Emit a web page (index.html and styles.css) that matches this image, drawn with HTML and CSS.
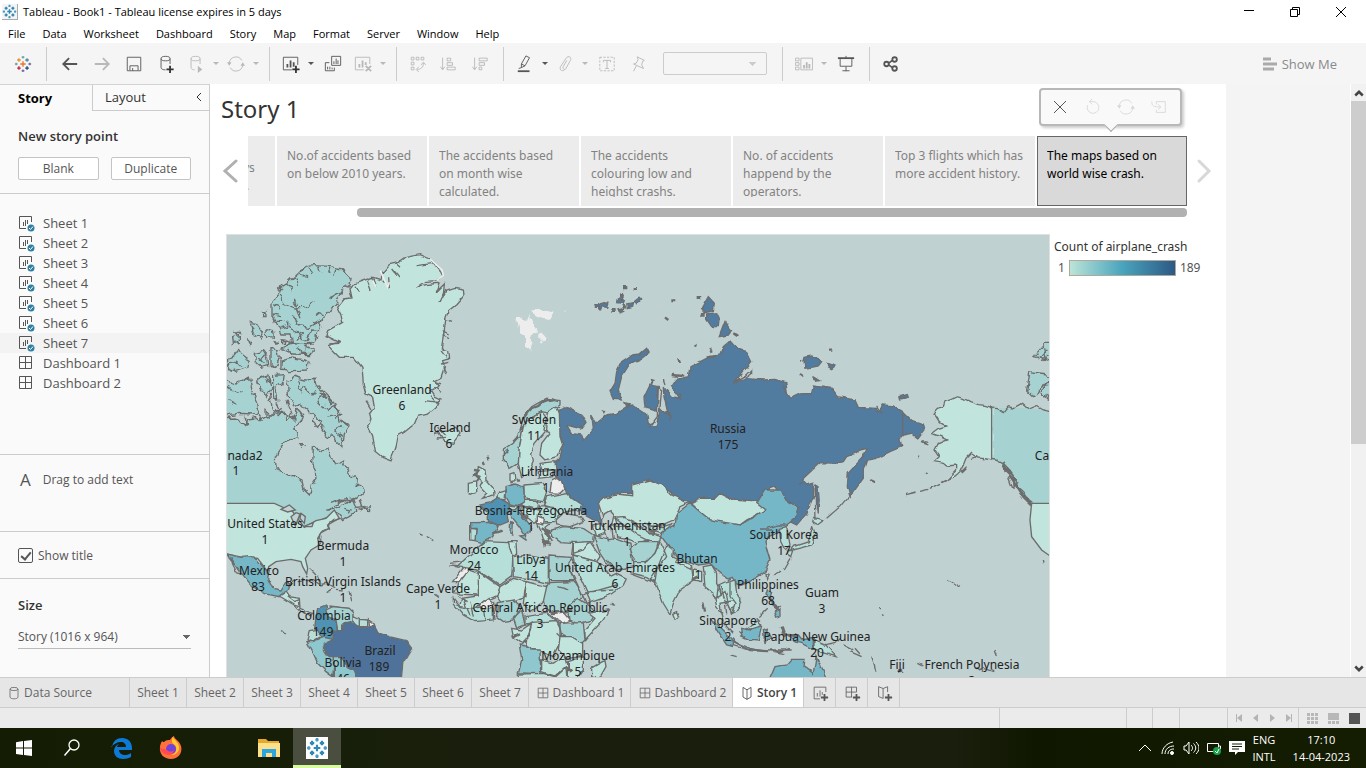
FILE: index.html
```html
<!DOCTYPE html>
<html lang="en">
<head>
<meta charset="utf-8">
<title>Tableau - Book1</title>
<link rel="stylesheet" href="styles.css">
</head>
<body>
<svg class="defs" aria-hidden="true">
  <defs>
    <symbol id="logo" viewBox="0 0 20 20"><path d="M10 7v6M7 10h6" stroke="var(--l1)"/><path d="M5.500 3.500v4M3.500 5.500h4" stroke="var(--l2)"/><path d="M14.500 3.500v4M12.500 5.500h4" stroke="var(--l3)"/><path d="M5.500 12.500v4M3.500 14.500h4" stroke="var(--l4)"/><path d="M14.500 12.500v4M12.500 14.500h4" stroke="var(--l5)"/><path d="M10 1v3M8.500 2.500h3M2.500 8.500v3M1 10h3" stroke="var(--l6)"/><path d="M17.500 8.500v3M16 10h3M10 16v3M8.500 17.500h3" stroke="var(--l7)"/></symbol>
    <symbol id="sheet" viewBox="0 0 20 20"><path d="M16.500 9V3.500h-13v13H10M7 10v4M10 7v7M12.500 9v3"/></symbol>
    <symbol id="grid" viewBox="0 0 20 20"><path d="M4 4h12v12H4zM10 4v12M4 10h12"/></symbol>
    <symbol id="book" viewBox="0 0 20 20"><path d="M10 6 5 3v12l5 3 5-3V3zM10 6v12"/></symbol>
    <symbol id="refresh" viewBox="0 0 20 20"><path d="M2.500 9a7.500 7.500 0 0 1 14-3M17.500 11a7.500 7.500 0 0 1-14 3"/><path class="solid" d="M0 8h5l-2.500 4zM15 12h5l-2.500-4z"/></symbol>
    <symbol id="ss" viewBox="0 0 18 18"><path d="M13.500 8V2.500h-12v12H8M5.500 8v4M7.500 6v6M9.500 6v4"/><circle class="dot" cx="13" cy="14" r="3.500"/><path class="tick" d="m11 14 1.500 1.500L15 12.500"/></symbol>
  </defs>
</svg>
<div class="app">
  <header class="titlebar">
    <svg class="appicon logo-blue" viewBox="0 0 20 20"><use href="#logo"/></svg>
    <span class="wtitle">Tableau - Book1 - Tableau license expires in 5 days</span>
    <button class="win" aria-label="Minimize"><svg viewBox="0 0 12 12"><path d="M1 4.500h10"/></svg></button>
    <button class="win" aria-label="Restore"><svg viewBox="0 0 12 12"><path d="M1.500 3.500h7v7h-7zM3.500 3.500v-2h7v7h-2"/></svg></button>
    <button class="win" aria-label="Close"><svg viewBox="0 0 12 12"><path d="m1 1 10 10M11 1 1 11"/></svg></button>
  </header>
  <nav class="menu">
    <button>File</button><button>Data</button><button>Worksheet</button><button>Dashboard</button><button>Story</button><button>Map</button><button>Format</button><button>Server</button><button>Window</button><button>Help</button>
  </nav>
  <div class="toolbar">
    <div class="tg"><button class="tb" aria-label="Start"><svg class="logo-color" viewBox="0 0 20 20"><use href="#logo"/></svg></button></div>
    <div class="tg">
      <button class="tb on" aria-label="Undo"><svg class="heavy" viewBox="0 0 20 20"><path d="M18 10H3M9 3.500 2.500 10 9 16.500"/></svg></button>
      <button class="tb" aria-label="Redo"><svg class="heavy" viewBox="0 0 20 20"><path d="M2 10h15M11 3.500l6.500 6.500-6.500 6.500"/></svg></button>
      <button class="tb on" aria-label="Save"><svg viewBox="0 0 20 20"><path d="M2.500 2.500h15v15h-15zM5.500 17v-5h9v5M8.500 14.500v3"/></svg></button>
      <button class="tb on" aria-label="New data source"><svg viewBox="0 0 20 20"><path d="M4.500 4v10c0 1.500 2 2.500 5 2.500M14.500 4v6"/><ellipse cx="9.500" cy="4" rx="5" ry="2.500"/><path class="plus" d="M14.500 12v8M10.500 16h8"/></svg></button>
      <button class="tb n" aria-label="Auto updates"><svg viewBox="0 0 20 20"><path d="M4.500 4v10c0 1.500 2 2.500 4 2.500M14.500 4v6"/><ellipse cx="9.500" cy="4" rx="5" ry="2.500"/><path class="solid" d="M12 12l5 4-5 4z"/></svg></button>
      <button class="car" aria-label="Updates menu"></button>
      <button class="tb n" aria-label="Refresh"><svg viewBox="0 0 20 20"><use href="#refresh"/></svg></button>
      <button class="car" aria-label="Refresh menu"></button>
    </div>
    <div class="tg">
      <button class="tb n on" aria-label="New worksheet"><svg viewBox="0 0 20 20"><path d="M17.500 11V2.500h-16v14H11"/><path class="bars" d="M6 10v4M9.500 6v8M13 8v5"/><path class="plus" d="M15.500 12v8M11.500 16h8"/></svg></button>
      <button class="car on" aria-label="New menu"></button>
      <button class="tb on" aria-label="Duplicate"><svg viewBox="0 0 20 20"><path d="M8.500 1.500h10v10h-10zM11 7v3M13.500 4v6M15.500 6v4M6 8.500H1.500v9h10V14M4 13v3M6.500 13v3M9 14v2"/></svg></button>
      <button class="tb n" aria-label="Clear sheet"><svg viewBox="0 0 20 20"><path d="M17.500 10V2.500h-16v14H11"/><path class="bars" d="M6 10v4M9.500 6v8M13 8v3M13 12l6 6M19 12l-6 6"/></svg></button>
      <button class="car" aria-label="Clear menu"></button>
    </div>
    <div class="tg">
      <button class="tb n" aria-label="Swap"><svg viewBox="0 0 20 20"><path d="M2.500 2.500h3v3h-3zM8 2.500h3v3H8zM13.500 2.500h3v3h-3zM2.500 8h3v3h-3zM2.500 13.500h3v3h-3zM16 9c0 5-3 7-7 7M13.500 11 16 8l2.500 3M11 13l-3 3 3 3"/></svg></button>
      <button class="tb" aria-label="Sort ascending"><svg viewBox="0 0 20 20"><path d="M4 3v13M1.500 13 4 16.500 6.500 13M9 3.500h4v3H9zM9 8.500h6v3H9zM9 13.500h9v3H9z"/></svg></button>
      <button class="tb" aria-label="Sort descending"><svg viewBox="0 0 20 20"><path d="M4 3v13M1.500 13 4 16.500 6.500 13M9 3.500h9v3H9zM9 8.500h6v3H9zM9 13.500h3v3H9z"/></svg></button>
    </div>
    <div class="tg">
      <button class="tb n on" aria-label="Highlight"><svg viewBox="0 0 20 20"><path d="m6 10 5-9 4 2-5 9-4 2zM6 10l4 2M3 15l3-1"/><path class="bars" d="M2 18h13"/></svg></button>
      <button class="car on" aria-label="Highlight menu"></button>
      <button class="tb n" aria-label="Group"><svg viewBox="0 0 20 20"><path d="m12 6-4 7c-1 3 2 4 3 2l5-9c2-4-3-6-5-2L5 13c-2 4 3 6 5 3"/></svg></button>
      <button class="car" aria-label="Group menu"></button>
      <button class="tb" aria-label="Show labels"><svg viewBox="0 0 20 20"><path stroke-dasharray="2.500 1.500" d="M2 2.500h16v15H2z"/><path d="M6 8V6h8v2M10 6v9M8 15h4"/></svg></button>
      <button class="tb" aria-label="Fix axes"><svg viewBox="0 0 20 20"><path d="m8 2 8 4-2 1-1 4 2 4-11-5 3-1 2-4zM7 12l-3 6"/></svg></button>
      <select class="fit" aria-label="Fit" disabled><option></option></select>
    </div>
    <div class="tg">
      <button class="tb n" aria-label="Show cards"><svg viewBox="0 0 20 20"><path d="M.500 3.500h4v3h-4zM.500 8.500h4v3h-4zM.500 13.500h4v3h-4zM6.500 3.500h13v13h-13z"/><path class="bars" d="M10 11v4M13 8v7M16 10v5"/></svg></button>
      <button class="car" aria-label="Cards menu"></button>
      <button class="tb on" aria-label="Presentation"><svg viewBox="0 0 20 20"><path class="bars" d="M1 3.500h18"/><path d="M3.500 4v8.500h13V4M10 1v2M10 13v5M6 17.500h8"/></svg></button>
    </div>
    <div class="tg last"><button class="tb n on" aria-label="Share"><svg class="heavy" viewBox="0 0 20 20"><circle cx="5" cy="10" r="2.500"/><circle cx="14" cy="5" r="2.500"/><circle cx="14" cy="15" r="2.500"/><path d="m7.500 9 4-3M7.500 11l4 3"/></svg></button></div>
    <button class="showme"><svg viewBox="0 0 16 16"><path d="M1 3h8M1 8h14M1 13h11"/></svg>Show Me</button>
  </div>

  <div class="body">
    <aside class="side">
      <div class="stabs"><button class="st cur">Story</button><button class="st lay">Layout<svg viewBox="0 0 8 10"><path d="M6 1 2 5l4 4"/></svg></button></div>
      <section class="points"><h2>New story point</h2><div class="btns"><button>Blank</button><button>Duplicate</button></div></section>
      <ul class="sheets">
        <li><svg viewBox="0 0 18 18"><use href="#ss"/></svg>Sheet 1</li>
        <li><svg viewBox="0 0 18 18"><use href="#ss"/></svg>Sheet 2</li>
        <li><svg viewBox="0 0 18 18"><use href="#ss"/></svg>Sheet 3</li>
        <li><svg viewBox="0 0 18 18"><use href="#ss"/></svg>Sheet 4</li>
        <li><svg viewBox="0 0 18 18"><use href="#ss"/></svg>Sheet 5</li>
        <li><svg viewBox="0 0 18 18"><use href="#ss"/></svg>Sheet 6</li>
        <li class="hov"><svg viewBox="0 0 18 18"><use href="#ss"/></svg>Sheet 7</li>
        <li><svg viewBox="0 0 18 18"><path d="M1.500 2.500h12v12h-12zM7.500 2.500v12M1.500 8.500h12"/></svg>Dashboard 1</li>
        <li><svg viewBox="0 0 18 18"><path d="M1.500 2.500h12v12h-12zM7.500 2.500v12M1.500 8.500h12"/></svg>Dashboard 2</li>
      </ul>
      <section class="drag"><b>A</b>Drag to add text</section>
      <section class="show"><label><input type="checkbox" checked>Show title</label></section>
      <section class="size"><h2><label for="size">Size</label></h2><select id="size"><option>Story (1016 x 964)</option></select></section>
    </aside>

    <main class="canvas">
      <h1>Story 1</h1>
      <div class="strip">
        <button class="nav" aria-label="Previous"><svg viewBox="0 0 16 26"><path d="M14 3 3 13l11 10"/></svg></button>
        <div class="cards">
          <button class="card cut">ys<br>&nbsp;.</button>
          <button class="card"><span>No.of accidents based on below 2010 years.</span></button>
          <button class="card"><span>The accidents based on month wise calculated.</span></button>
          <button class="card"><span>The accidents colouring low and heighst crashs.</span></button>
          <button class="card"><span>No. of accidents happend by the operators.</span></button>
          <button class="card"><span>Top 3 flights which has more accident history.</span></button>
          <button class="card active"><span>The maps based on world wise crash.</span></button>
        </div>
        <button class="nav next" aria-label="Next"><svg viewBox="0 0 16 26"><path d="m3 3 10 10L3 23"/></svg></button>
      </div>
      <div class="pop">
        <button class="x" aria-label="Delete"><svg viewBox="0 0 20 20"><path d="m4 4 12 12M16 4 4 16"/></svg></button>
        <button aria-label="Revert"><svg viewBox="0 0 20 20"><path d="M4 8a6.500 6.500 0 1 0 6-4H6M9 1 6 4l3 3"/></svg></button>
        <button aria-label="Update"><svg viewBox="0 0 20 20"><use href="#refresh"/></svg></button>
        <button aria-label="Save as new"><svg viewBox="0 0 20 20"><path d="M7 7V4h10v12H7v-3M2 4c0 5 2 6 10 6M9 7l3 3-3 3"/></svg></button>
      </div>
      <div class="hbar"></div>
      <div class="view">
        <div class="mapbox">
        <svg class="map" viewBox="227 235 822 442" preserveAspectRatio="xMinYMin slice" role="img" aria-label="Crash count by country">
          <defs>
            <filter id="coast" x="-5%" y="-5%" width="110%" height="110%" color-interpolation-filters="sRGB"><feTurbulence type="fractalNoise" baseFrequency=".045" numOctaves="1" seed="4"/><feDisplacementMap in="SourceGraphic" scale="14" xChannelSelector="R" yChannelSelector="G"/></filter>
            <filter id="fjord" x="-5%" y="-5%" width="110%" height="110%" color-interpolation-filters="sRGB"><feTurbulence type="fractalNoise" baseFrequency=".055" numOctaves="1" seed="9"/><feDisplacementMap in="SourceGraphic" scale="26" xChannelSelector="R" yChannelSelector="G"/></filter>
          </defs>
          <!-- Arctic Canada and Greenland -->
          <g class="land" transform="translate(226 234) scale(.3333)">
            <g filter="url(#fjord)">
            <path class="c3" d="M-20 556 20 552 40 556 60 575 65 556 90 550 100 558 120 545 130 552 148 530 160 542 172 530 185 560 205 548 215 525 232 545 225 562 205 580 215 608 190 620 165 640 148 665 150 703 185 718 228 738 235 768 250 783 256 758 270 738 268 708 260 688 262 642 290 650 308 645 316 672 330 690 350 678 352 694 372 712 375 725 392 735 395 750 410 760 412 778 395 793 345 800 312 828 325 826 348 812 380 796 390 820 432 815 434 830 410 828 385 822 386 836 350 860 330 836 325 848 300 853 270 860 235 890 200 850 145 830-20 830z"/>
              <path class="c3" d="M232 104 260 95 310 97 345 104 375 130 372 150 350 165 340 195 315 225 290 255 280 290 265 318 240 335 262 345 255 362 200 360 165 345 200 330 195 300 165 300 150 270 138 245 138 205 155 180 165 160 190 145 210 125z"/>
              <path class="n" d="M163 180 175 210 205 222 235 220 265 205M205 250 220 275 250 280 280 262M310 190 355 170M180 265 240 320 262 285M205 200 225 250M195 285 230 300 210 318M170 320 205 330 260 328M180 150 200 165M200 135 218 150M225 112 240 130M250 100 258 120M275 97 285 115M305 98 312 118M330 105 325 122M145 215 165 225M140 240 165 245M150 262 172 262M160 282 185 275M290 245 270 240M285 270 262 265M278 292 255 290M185 345 195 358M215 340 222 360M240 340 238 358"/>
              <path class="c3" d="M165 380 200 372 230 376 250 385 245 408 190 410 165 405zM135 342 155 348 160 370 150 405 135 390zM85 355 110 350 125 370 128 395 105 400 88 385zM5 375 25 365 40 345 55 370 70 380 65 400 30 412 5 400zM72 265 90 268 112 300 105 315 85 300zM122 285 142 290 145 310 125 308zM20 310 40 305 40 325 22 328zM140 425 175 422 172 445 150 460 155 500 140 490zM95 435 125 425 135 460 120 485 98 460zM185 445 205 430 235 438 265 436 272 455 300 480 330 510 345 560 372 575 355 600 350 640 330 620 300 600 280 570 260 540 235 520 210 510 188 500zM-10 435 30 450 70 430 80 470 100 520 90 540 40 538-10 550zM110 235h10v10h-10zM25 292 42 296 35 300zM170 322h8v10h-8zM140 320 155 322 150 328zM68 318 76 322 74 336zM222 632h12l-4 10z"/>
              <path class="n" d="M215 440 225 470 240 460 250 478 270 480M290 485 275 510M330 515 305 530M345 575 325 590 350 605M10 500 30 510M5 460 35 480 50 470M150 505 160 535 200 550M180 500 195 540 205 560M130 480 140 530 175 545M55 545 65 575M95 540 110 560M115 530 135 550 170 520M120 360 105 380M95 370 115 390M30 380 45 395M5 390 35 385M285 515 310 525M300 550 330 545M270 470 255 480M345 540 330 560M350 620 335 600"/>
              <path class="n dark" d="M285 478 300 490M308 492 320 510M328 515 340 530M345 560 365 575"/>
              <path class="sea" d="M265 545 285 560 275 580 262 565z"/>
            </g>
            <g filter="url(#coast)">
              <path class="c1" d="M378 192 372 165 385 150 410 141 440 130 465 138 470 115 490 92 520 85 540 70 580 62 610 75 625 90 645 115 650 125 635 140 600 142 572 162 600 152 640 148 630 175 655 150 652 185 665 168 690 160 712 165 714 185 690 212 668 230 660 250 655 290 650 320 646 345 665 350 668 375 650 380 655 400 645 430 625 440 640 455 615 470 625 485 645 495 635 515 605 540 575 547 565 570 535 595 517 605 510 640 495 678 470 668 448 650 440 605 425 575 435 555 430 540 445 520 440 490 420 480 412 450 408 400 385 370 340 370 306 335 340 325 300 305 305 290 350 265 345 240 335 220 355 195z"/>
              <path class="n" d="M400 172 390 155M435 168 425 140M450 155 440 132M520 130 500 105M525 100 510 85M575 95 620 88M642 205 660 165M655 255 675 262M650 305 672 315M645 350 660 370M645 390 670 385M620 440 645 450M600 500 640 505M615 488 635 510M420 500 435 525M470 140 490 160 488 130M310 330 340 328M650 290 668 300M650 400 660 420M625 460 645 475"/>
              <path class="c1" d="M635 590 665 588 690 580 702 600 680 628 655 622z"/><path class="n" d="M635 580 660 605M640 595 625 600M632 612 660 610"/>
            </g>
            <path class="snow" d="M612 75 648 108 652 124 632 140M463 110 485 160 490 145M440 140 450 158"/>
          </g>
          <!-- United States to Brazil -->
          <g class="land" transform="translate(226 450) scale(.3333)">
            <path class="c1" d="M-9 160H145L200 185 235 232 270 212 300 205 325 180 340 205 305 225 310 235 285 248 275 265 280 285 255 300 238 325 245 355 242 372 230 350 225 335 195 328 150 335 128 350 125 365 95 325 70 322 40 320-9 310z"/>
            <path class="sea" d="M165 178 190 165 208 180 185 186zM195 200 210 188 222 192 208 228zM225 190 238 200 235 220 222 205zM232 230 262 218 258 230z"/>
            <g filter="url(#coast)">
            <path class="n" d="M340 205 320 212 305 225 310 235 292 240 285 248 275 265 285 270 280 285 285 260"/>
            <path class="c4" d="M3 312 45 322 70 320 95 330 112 352 130 360 125 385 140 415 165 420 180 395 198 400 190 420 170 430 160 440 120 432 80 410 55 380 30 350 10 325z"/>
            <path class="sea" d="M14 322 45 370 30 365z"/>
            <path class="c1" d="M160 438 180 425 190 440 220 445 222 475 245 485 262 490 255 500 230 488 205 465 180 450z"/>
            <path class="n" d="M185 440 205 455 222 448M205 465 222 470M235 480 232 490M190 410 200 388M315 160 340 150 370 155 390 140M355 175 375 180 370 190M400 150 408 170 430 178M250 355 270 375M215 395 260 390 280 405M280 405 300 400 325 412 305 425M330 418 350 420M370 425 378 455M275 380 280 395M310 468 370 475"/>
            <path class="c5" d="M275 475 300 465 305 495 330 510 335 545 320 560 320 595 300 590 265 545 270 500z"/>
            <path class="c3" d="M300 480 320 470 370 475 385 490 380 515 350 525 350 540 335 540 330 510 305 500z"/>
            <path class="c2" d="M380 495 400 505 400 530 385 525zM400 508 425 510 425 530 400 530z"/>
            <path class="c0" d="M428 510 443 520 432 532z"/>
            <path class="c2" d="M250 545 275 540 285 560 258 575 243 570z"/>
            <path class="c3b" d="M243 575 260 575 290 562 318 568 292 590 300 615 325 620 325 683 300 665 275 640 262 610zM325 620 345 617 365 650 385 660 400 690 320 690z"/>
            <path class="c7" d="M320 545 350 540 355 520 385 520 400 533 440 530 445 520 455 548 490 560 540 572 557 595 530 640 525 700 400 700 385 660 365 650 345 620 310 620 292 600 295 580 318 570z"/>
            <path class="n" d="M165 545 180 552M580 252 590 256M600 258 622 272M670 345 705 348M625 430 640 440"/>
            </g>
          </g>
          <!-- Northern Europe and Russia -->
          <g class="land" transform="translate(450 280) scale(.3333)">
            <g filter="url(#coast)">
            <path class="c6" d="M320 390 345 380 395 405 408 430 395 447 350 435 365 460 395 465 400 480 430 445 425 405 440 430 470 405 500 400 530 380 545 375 590 405 595 430 610 438 628 410 620 390 585 380 582 350 600 312 622 320 625 380 640 395 655 405 642 350 640 320 665 350 690 355 665 320 680 298 715 290 720 260 770 235 810 225 820 200 840 183 860 205 890 215 905 245 850 310 880 295 940 300 975 298 1008 308 1012 340 1022 355 1050 342 1085 340 1090 318 1145 325 1165 350 1215 360 1225 382 1280 385 1285 395 1300 375 1330 378 1358 395 1390 425 1420 435 1425 450 1405 475 1385 460 1358 465 1350 475 1355 500 1320 515 1280 535 1250 540 1240 570 1240 595 1200 650 1192 620 1195 580 1240 530 1252 505 1230 510 1215 520 1190 530 1180 545 1160 550 1110 548 1055 600 1070 615 1090 610 1090 650 1070 700 1040 735 1020 725 1045 685 1005 665 975 620 950 630 945 655 920 665 880 660 840 655 810 640 795 660 730 670 690 660 665 640 600 600 545 615 550 640 500 640 460 655 445 690 455 725 430 720 395 700 390 670 350 640 340 610 320 590 315 550 330 535 338 495 330 460z"/>
            <path class="c6" d="M590 205 597 218 575 235 540 250 515 290 505 330 517 360 490 358 480 335 495 310 500 275 515 245 545 225 570 222zM775 50 793 70 790 92 765 98 755 85zM770 102 800 98 808 115 805 140 785 140 770 118zM825 125 845 150 835 165 808 170zM755 98 762 98 762 108 752 108zM525 368 538 372 532 382zM455 390 465 392 460 400zM605 302 612 304 608 312z"/>
            <path class="c6" d="M1065 232 1085 228 1105 235 1115 245 1105 258 1085 262 1065 265 1062 245zM1130 250 1155 258 1145 266 1135 260zM1088 290 1108 302 1098 304zM1350 350 1372 344 1375 352 1352 357zM1096 615 1104 620 1108 660 1102 700 1098 665z"/>
            <path class="c6" d="M435 74h14l-2 8h-10zM450 72 462 68 474 70 470 82 456 80 452 92 446 86zM500 60 510 54 524 58 520 70 502 68zM512 42 520 38 522 50 512 50zM504 90 518 86 524 94 512 98zM530 72 548 68 545 82 532 86zM552 62 565 52 572 60 560 74zM486 86h9v8h-9zM553 26h8v5h-8zM521 20h9v6h-9zM742 50h10v5h-10zM666 60h8v5h-8z"/>
            <path class="n dark" d="M514 62 522 40M520 74 526 86M645 112 655 120M850 160 862 168M780 205 785 215M735 195 738 200M685 235 690 250M1050 242 1056 246M1140 212 1150 212M1050 282 1058 288M665 285 700 288M770 232 800 228"/>
            <path class="sea" d="M625 320 635 330 628 400 618 440 600 440 622 410zM850 308 885 290 905 270 905 282 880 300z"/>
            <path class="n" d="M645 395 660 405 658 420M690 340 695 355M640 300 645 315M1000 315 1012 345M1280 378 1295 400M1410 485 1435 490M1260 598 1275 605M1405 530 1410 534"/>
            <path class="c3" d="M160 510 190 490 210 455 220 410 245 380 290 355 330 362 330 375 300 400 275 395 250 410 220 440 208 500 205 550 180 565 160 540z"/>
            <path class="n dark" d="M160 525 175 510M190 485 205 470M210 450 220 440M220 415 235 395 245 385 265 378 280 365 295 360 310 358"/>
            <path class="c1" d="M208 500 220 440 240 415 275 395 292 420 290 450 255 490 245 520 250 545 235 580 215 590 205 555zM292 400 320 380 328 400 330 470 338 495 320 530 285 540 270 525 275 490 298 460 282 450zM270 550 315 545 318 570 275 568zM265 575 310 570 308 590 265 595z"/>
            <path class="c1" d="M85 560 105 570 108 600 130 625 132 645 95 655 110 640 92 620 100 605 80 590zM55 610 80 605 80 635 55 645zM180 582 192 578 195 602 180 605z"/>
            <path class="n dark" d="M72 570 85 572 75 585 88 590 80 605M112 530 116 538M100 545 105 555M200 600 210 598"/>
            <path class="c0" d="M305 600 320 592 338 605 345 625 330 640 300 638z"/>
            </g>
            <path class="n" d="M1358 395V465"/>
            <g filter="url(#fjord)"><path class="ice" d="M198 112 215 110 235 122 238 105 250 140 268 150 250 160 238 210 225 195 225 170 205 155zM250 90 275 90 308 98 295 120 260 112zM268 155 288 175 280 188 268 175zM343 92h6v3h-6z"/></g>
          </g>
          <!-- Eurasia and Africa -->
          <g class="land" transform="translate(450 470) scale(.3333)">
            <g filter="url(#coast)">
            <path class="c2" d="M222 45 280 40 290 65 280 95 235 88 222 75zM290 80 350 68 365 85 395 105 385 120 345 125 330 135 310 115 280 105zM270 110 310 112 325 130 320 155 285 155 270 135zM215 92 255 90 270 110 240 115 215 105z"/>
            <path class="c1" d="M212 110 270 115 275 145 255 160 235 145 215 130zM262 158 300 160 285 172 300 200 285 225 275 190z"/>
            <path class="c0" d="M262 138 280 145 278 165 262 160z"/>
            <path class="n dark" d="M285 185 305 215M280 215 300 222M275 175 300 190M290 180 315 190M213 128 232 148M220 90 210 110 235 112M235 110 270 120"/>
            <path class="c4" d="M168 50 195 42 220 50 225 95 205 108 180 102 168 80z"/>
            <path class="c5" d="M88 105 120 98 145 82 175 100 182 110 172 135 175 155 150 165 115 155 115 125z"/>
            <path class="c4" d="M175 115 205 110 210 130 245 175 235 185 225 195 205 165 185 140zM210 198 230 195 228 210zM182 155 190 158 188 195 180 190z"/>
            <path class="c2" d="M140 85 150 68 168 62 165 90zM178 105 205 108 195 120 178 118z"/>
            <path class="c4" d="M62 158 110 157 145 168 128 200 95 220 75 215 78 175 62 175z"/><path class="c2" d="M62 175 78 178 75 212 62 210z"/>
            <path class="c3" d="M305 180 340 170 400 175 430 195 428 215 365 220 330 218 305 200z"/>
            <path class="c1" d="M430 165 460 160 465 190 440 200zM370 218 420 215 450 260 440 275 370 255z"/>
            <path class="c1" d="M445 100 460 85 500 75 545 80 545 45 600 30 640 48 665 75 705 95 722 95 690 110 680 130 670 150 635 165 600 165 560 160 520 140 495 140 500 160 480 170 462 150z"/>
            <path class="c1" d="M722 98 750 85 795 85 810 70 850 90 905 95 930 90 945 120 890 150 870 165 830 165 780 150 750 125z"/>
            <path class="c2" d="M495 165 530 170 560 195 590 210 565 220 530 205 500 200zM495 145 525 142 560 165 600 190 635 200 630 225 600 215 560 195zM600 168 640 170 670 160 635 190 600 182z"/>
            <path class="c4" d="M720 100 750 125 780 150 870 165 945 120 920 100 945 60 990 60 1005 85 1045 115 1035 145 1010 165 980 190 955 200 945 215 950 235 960 270 945 305 905 328 870 345 850 330 830 325 800 300 780 280 745 285 720 275 690 280 665 240 635 200 640 185 675 165 680 130z"/>
            <path class="c3" d="M430 195 465 205 500 205 540 220 545 260 550 290 500 300 470 280 450 250zM540 235 570 215 625 215 615 250 590 275 555 275z"/>
            <path class="c2" d="M548 275 590 275 615 250 630 215 640 235 650 260 620 300 615 335 590 320 550 310zM650 225 670 240 668 262 725 290 730 330 690 360 672 395 660 432 640 400 620 345 600 330 620 300z"/>
            <path class="c1" d="M668 430 680 425 686 440 675 448zM680 268 725 285 722 298 675 275zM730 300 755 305 755 335 730 330z"/>
            <path class="c2" d="M760 290 785 285 800 310 800 340 815 375 800 400 790 370 765 350zM805 345 850 325 860 345 850 370 870 385 868 415 845 430 830 395 800 390z"/>
            <path class="c1" d="M828 392 855 390 860 410 840 418zM795 385 825 365 835 395 810 400 815 430 800 410z"/>
            <path class="c2" d="M368 255 440 275 460 290 480 320 500 310 530 325 520 345 480 375 420 395 405 360 385 330z"/>
            <path class="c2" d="M20 290 85 232 105 215 175 218 190 240 185 320 150 345 80 300 50 295z"/>
            <path class="c1" d="M175 215 198 215 200 250 188 265zM55 300 85 310 85 375 15 372 25 340zM85 305 150 350 145 375 100 395 70 420 30 410 35 385 85 378z"/>
            <path class="c0" d="M42 292 60 295 30 335 8 335z"/>
            <path class="c2" d="M188 260 240 255 295 265 295 340 230 325 190 320z"/>
            <path class="c3" d="M297 258 365 262 358 290 372 332H297zM297 338 375 335 400 375 380 410 355 425 310 425 285 410 275 375z"/>
            <path class="c1" d="M150 350 190 325 228 335 225 380 195 390 155 400 140 380zM230 335 290 350 280 395 240 425 220 400 225 360z"/>
            <path class="c2" d="M30 410 70 415 100 410 130 400 130 450 75 455 40 435 10 400 10 385z"/>
            <path class="c0" d="M88 405 115 385 132 400 130 412 95 418z"/>
            <path class="c3" d="M142 398 190 390 215 410 190 450 160 455 140 440zM190 445 215 420 225 465 200 475z"/>
            <path class="c0" d="M290 425 340 425 362 450 340 460 320 450z"/>
            <path class="c2" d="M225 440 290 430 320 455 270 460 225 465z"/>
            <path class="c3" d="M355 410 385 385 415 405 440 425 425 450 385 462 360 450z"/>
            <path class="c1" d="M405 480 435 445 415 430 475 420 460 450 405 510z"/>
            <path class="c1" d="M185 475 215 480 245 460 235 500 215 520 190 500zM245 460 320 455 335 485 325 530 310 560 275 545 235 535 225 515z"/>
            <path class="c3" d="M330 460 400 458 405 510 395 520 330 495z"/>
            <path class="c3b" d="M208 525 240 530 245 540 270 540 272 605 275 612 205 608 215 570z"/>
            <path class="c1" d="M330 500 365 500 398 520 398 560 350 565 325 540zM275 570 310 580 345 555 355 590 320 620 275 605zM205 612 280 610 315 620 350 590 355 630 205 630zM355 575 400 560 400 600 380 630 355 630z"/>
            <path class="c1" d="M425 595 465 572 468 590 448 625 425 620z"/>
            <path class="sea" d="M318 150 340 130 390 138 400 155 360 170 320 165zM465 130 480 122 492 135 485 165 490 210 475 212 465 180 455 165 455 145zM365 265 420 390 410 402 355 285z"/>
            <path class="n dark" d="M595 180 620 185M600 190 615 190M130 190 155 182M180 160 190 158M725 330 745 320M485 402 495 405M760 395 765 425M350 590 365 605M190 500 210 490M305 430 370 420"/>
            <path class="n" d="M40 390 60 435M60 395 70 440M100 415 105 450M130 400 135 450M25 380 50 395M370 215 365 255M420 215 400 240 370 250M430 365 500 345M400 375 420 365 490 360M325 455 335 495M325 350 355 360M320 490 330 500M810 345 825 390 830 430M470 270 500 300 520 298M540 310 620 340"/>
            <path class="n" d="M0 280 35 275M810 420 820 455M815 455 850 490"/>
            <path class="c4" d="M785 450 805 465 850 510 850 530 830 525 800 480zM870 485 900 478 925 500 905 510 880 505z"/>
            </g>
          </g>
          <!-- Pacific -->
          <g class="land" transform="translate(730 280) scale(.3333)">
            <path class="c3 bare" d="M785 384 850 384 900 384 970 398V670H905L870 640 850 590 820 550 785 538z"/>
            <g filter="url(#coast)">
            <path class="c1" d="M789 384 765 376 745 374 720 365 700 355 680 350 660 360 645 365 640 380 625 385 612 400 628 425 650 438 625 445 605 460 632 470 650 480 625 490 615 510 628 530 612 545 640 550 650 558 680 555 680 570 655 595 670 592 690 575 700 555 708 535 722 520 745 534 789 540"/>
            <path class="n" d="M785 384 800 386 820 398 835 380 850 384 875 370 895 388 920 378 940 390 960 395M785 538 800 540 820 550 835 565 850 590 870 640 905 670M655 598 635 608M630 610 600 625M595 628 570 634M560 636 528 644"/>
            <path class="n" d="M815 550 830 580 855 600 840 570 820 560M825 560 850 590 852 620 865 610M850 610 878 635 908 680 895 655 870 640M840 570 860 605M880 650 905 665 910 690M695 575 710 560M720 535 745 530M835 590 850 630M820 545 825 575 840 590"/>
            <path class="n dark" d="M820 555 835 580 852 605M855 615 880 650 905 675M830 565 850 585M695 578 708 565"/>
            <path class="c4" d="M1 1080 60 1105 115 1115 60 1112zM32 1045 62 1050 75 1032 95 1040 85 1080 60 1078 35 1068zM100 1052 112 1048 110 1060 125 1075 110 1075 105 1092zM112 930 125 935 120 955 108 945zM135 1000 150 990 150 1012 140 1015zM118 1200 135 1160 170 1155 185 1138 225 1138 222 1160 250 1180 258 1130 275 1165 292 1200zM170 1060 200 1062 215 1080 250 1075 252 1110 215 1090 190 1085z"/>
            <path class="c2" d="M252 1078 285 1092 318 1130 285 1120 252 1110zM45 1050 85 1025 95 1038 70 1045zM148 745 170 740 180 795 165 810 152 785zM248 740 255 760 245 795 180 812 190 800 235 785zM252 712 282 720 262 735 248 725zM175 810 188 812 182 830 172 822zM108 880 118 882 110 900z"/>
            <path class="n dark" d="M120 950 132 975 148 980 135 995M125 970 150 990M155 1040 165 1070M155 1060 200 1070M500 1175 520 1172"/>
            <path class="n" d="M85 1010 110 985M90 1025 80 1015M0 1095 50 1108 150 1115 180 1105M120 1110 185 1110M285 1095 325 1085 335 1075M340 1095 370 1110M360 1115 395 1130M375 1105 390 1122M425 1130 432 1150 438 1175M565 1150 580 1158M655 900 670 908M670 910 690 922M795 1110 802 1128M740 1160 760 1175M760 1165 790 1175M1 1125 20 1130M130 1115 160 1120M445 985 450 990M457 1003 460 1008M160 870 180 835M130 885 150 870M355 650 330 680 290 715M575 485 595 492M420 600 435 608M940 840 943 850M585 578 590 582"/>
            <path class="c2" d="M0 905 15 900 20 940 35 965 25 990 5 1000 15 970 0 950z"/>
            <path class="n" d="M210 610 220 602M255 615 258 720M90 750 130 750M110 745 145 735 170 735"/>
            </g>
            <path class="c1" d="M905 670H970V835L935 810 905 770 900 720z"/>
            <path class="n" d="M785 382V538M250 1078V1110"/>
            <g filter="url(#fjord)">
            <path class="c3" d="M912 230 945 190 980 190V250L935 235zM900 278 955 285 980 305 935 315 930 335 910 350 890 330zM940 315 980 310V365L940 345z"/>
            <path class="n" d="M930 235 955 210M935 245 958 225M940 205 950 240"/>
            </g>
          </g>
          <g class="lab">
            <text x="402" y="394">Greenland</text><text x="402" y="410">6</text>
            <text x="450" y="432">Iceland</text><text x="449" y="448">6</text>
            <text x="245" y="460">nada2</text><text x="236" y="475">1</text>
            <text x="265" y="528">United States</text><text x="265" y="544">1</text>
            <text x="343" y="550">Bermuda</text><text x="343" y="566">1</text>
            <text x="259" y="575">Mexico</text><text x="258" y="591">83</text>
            <text x="343" y="586">British Virgin Islands</text><text x="343" y="602">1</text>
            <text x="324" y="620">Colombia</text><text x="323" y="636">149</text>
            <text x="380" y="655">Brazil</text><text x="379" y="671">189</text>
            <text x="343" y="667">Bolivia</text><text x="343" y="683">46</text>
            <text x="534" y="424">Sweden</text><text x="534" y="440">11</text>
            <text x="547" y="476">Lithuania</text><text x="546" y="492">1</text>
            <text x="531" y="515">Bosnia-Herzegovina</text><text x="531" y="531">1</text>
            <text x="728" y="433">Russia</text><text x="728" y="449">175</text>
            <text x="474" y="554">Morocco</text><text x="474" y="570">24</text>
            <text x="438" y="593">Cape Verde</text><text x="438" y="609">1</text>
            <text x="531" y="564">Libya</text><text x="531" y="580">14</text>
            <text x="627" y="530">Turkmenistan</text><text x="627" y="546">1</text>
            <text x="615" y="572">United Arab Emirates</text><text x="615" y="588">6</text>
            <text x="697" y="563">Bhutan</text><text x="698" y="579">1</text>
            <text x="540" y="612">Central African Republic</text><text x="540" y="628">3</text>
            <text x="578" y="660">Mozambique</text><text x="578" y="676">5</text>
            <text x="784" y="539">South Korea</text><text x="784" y="555">17</text>
            <text x="768" y="589">Philippines</text><text x="768" y="605">68</text>
            <text x="822" y="597">Guam</text><text x="822" y="613">3</text>
            <text x="728" y="625">Singapore</text><text x="728" y="641">2</text>
            <text x="817" y="641">Papua New Guinea</text><text x="817" y="657">20</text>
            <text x="897" y="669">Fiji</text>
            <text x="972" y="669">French Polynesia</text><text x="972" y="685">3</text>
            <text x="1042" y="460">Ca</text>
          </g>
        </svg>
        </div>
        <div class="legend"><h3>Count of airplane_crash</h3><div class="scale">1<i></i>189</div></div>
      </div>
    </main>
    <div class="gutter"></div>
    <div class="vbar"><button aria-label="Scroll up"><svg viewBox="0 0 8 8"><path d="m1 6 3-3 3 3"/></svg></button><div class="thumb"></div><button aria-label="Scroll down"><svg viewBox="0 0 8 8"><path d="m1 2 3 3 3-3"/></svg></button></div>
  </div>

  <nav class="tabs">
    <button class="ds"><svg viewBox="0 0 20 20"><path d="M5 5v10c0 3 10 3 10 0V5"/><ellipse cx="10" cy="5" rx="5" ry="2"/></svg>Data Source</button>
    <button>Sheet 1</button><button>Sheet 2</button><button>Sheet 3</button><button>Sheet 4</button><button>Sheet 5</button><button>Sheet 6</button><button>Sheet 7</button>
    <button class="db"><svg viewBox="0 0 20 20"><use href="#grid"/></svg>Dashboard 1</button>
    <button class="db"><svg viewBox="0 0 20 20"><use href="#grid"/></svg>Dashboard 2</button>
    <button class="story"><svg viewBox="0 0 20 20"><use href="#book"/></svg>Story 1</button>
    <button class="new" aria-label="New worksheet"><svg viewBox="0 0 20 20"><use href="#sheet"/><path class="plus" d="M15 11v8M11 15h8"/></svg></button>
    <button class="new" aria-label="New dashboard"><svg viewBox="0 0 20 20"><path d="M15 9V3.500H3.500v11H10M9.500 3.500v11M3.500 9H15"/><path class="plus" d="M15 11v8M11 15h8"/></svg></button>
    <button class="new" aria-label="New story"><svg viewBox="0 0 20 20"><path d="M9 5 4 3v11l5 2V5l5-2v6"/><path class="plus" d="M15 11v8M11 15h8"/></svg></button>
  </nav>
  <div class="status">
    <span class="w127"></span><span class="w26"></span><span class="w27"></span><span class="w47"></span>
    <span class="vcr"><svg viewBox="0 0 60 10"><path d="M2 1v8h1V1zM8 1v8L3 5zM24 1v8l-5-4zM36 1v8l5-4zM52 1v8l5-4zM57 1v8h1V1z"/></svg></span>
    <span class="modes"><svg viewBox="0 0 54 12"><path class="g" d="M0 1h3v3H0zM4 1h3v3H4zM8 1h3v3H8zM0 5h3v3H0zM4 5h3v3H4zM8 5h3v3H8zM0 9h3v3H0zM4 9h3v3H4zM8 9h3v3H8zM21 1h11v7H21zM21 9h3v3h-3zM25 9h3v3h-3zM29 9h3v3h-3z"/><path class="d" d="M42 1h11v11H42z"/></svg></span>
  </div>
  <footer class="task">
    <button aria-label="Start"><svg viewBox="0 0 24 24"><path fill="#fff" d="M4 6.200 11 5v6.500H4zM12 4.900 20 4v7.500h-8zM4 12.500h7V19l-7-1zM12 12.500h8V20l-8-1z"/></svg></button>
    <button aria-label="Search"><svg viewBox="0 0 24 24"><circle cx="14" cy="9" r="5" fill="none" stroke="#fff" stroke-width="1.300"/><path d="m10.500 12.500-6 7" stroke="#fff" stroke-width="1.500"/></svg></button>
    <button class="wide" aria-label="Edge"><svg viewBox="0 0 24 24"><path fill="#0d7ad8" d="M2 11C3 5 7 2 12 2c6 0 10 4 10 10v2H9c0 3 3 5 6 5 2 0 4-.5 6-2v4c-2 1-5 2-8 2-5 0-9-3-9-8 0-3 2-6 5-7-1 1-2 2-2 3h9c0-3-2-5-5-5-4 0-7 2-10 5z"/></svg></button>
    <button aria-label="Firefox"><svg viewBox="0 0 24 24"><path fill="#ff7139" d="M3 5c1 1 1 1 2 1 2-2 4-2 6-2 1-2 2-3 4-4 0 3 5 4 7 10 2 7-3 13-10 13C5 23 0 18 1 11c0-2 1-4 2-6z"/><path fill="#ffcb2e" d="M14 1c1 3 7 6 6 12-1 4-4 6-8 6 4-1 6-4 5-8-1-3-4-3-4-6 0-2 0-3 1-4z"/><circle cx="12" cy="13" r="5" fill="#6f43dd"/><path fill="#ff4a50" d="M1 11c2 3 3 1 7 3 2 2 5 2 7 0-1 5-5 6-9 4-3-1-5-4-5-7z"/></svg></button>
    <button class="folder" aria-label="File Explorer"><svg viewBox="0 0 24 24"><path fill="#e7a92b" d="M1 3h8l2 2h11v4H1z"/><path fill="#ffe08a" d="M1 7h22v14H1z"/><path fill="#2aa5df" d="M5 13h14v8h-4v-4H9v4H5z"/></svg></button>
    <button class="run" aria-label="Tableau"><svg class="logo-blue" viewBox="0 0 20 20"><use href="#logo"/></svg></button>
    <div class="tray">
      <svg viewBox="0 0 16 16"><path d="m2 11 6-6 6 6"/></svg>
      <svg viewBox="0 0 16 16"><path d="M2 14C2 8 7 3 13 2M5 14c0-5 4-8 9-8M8 14c0-3 2-5 6-5"/><circle cx="12" cy="13" r="1.500" fill="#fff"/></svg>
      <svg viewBox="0 0 16 16"><path d="M1 6h2l3-4v12l-3-4H1zM8 5c2 2 2 4 0 6M10.500 3.500c3 3 3 6 0 9M13 2c4 4 4 8 0 12"/></svg>
      <svg viewBox="0 0 16 16"><path d="M1.500 3.500h11v8h-11zM13 6h1.500v3"/><circle cx="11" cy="11" r="4" fill="#16a34a" stroke="none"/><path d="M9 11l2 2 2-4"/></svg>
      <svg viewBox="0 0 16 16"><path fill="#fff" stroke="none" d="M0 1h16v11H9l-3 3v-3H0z"/><path stroke="#151e08" d="M3 4h10M3 6.500h10M3 9h7"/></svg>
      <span>ENG<br>INTL</span><time>17:10<br>14-04-2023</time>
    </div>
  </footer>
</div>
</body>
</html>
```

FILE: styles.css
```css
*{box-sizing:border-box}
body{margin:0;font-family:"Open Sans","Noto Sans",sans-serif;font-size:12px;color:#333}
button{background:none;border:0;padding:0;margin:0;font:inherit;color:inherit;display:flex;align-items:center;justify-content:center}
h1,h2,h3,ul{margin:0;padding:0}
svg{fill:none;stroke:currentColor;display:block}
.defs{position:absolute;width:0;height:0}
.app{height:100vh;display:flex;flex-direction:column;overflow:hidden}
.logo-blue{--l1:#2f87b5;--l2:#2f87b5;--l3:#2f87b5;--l4:#2f87b5;--l5:#2f87b5;--l6:#4a9ac4;--l7:#4a9ac4;stroke-width:2}
.logo-color{--l1:#e8762c;--l2:#eb912b;--l3:#59879b;--l4:#c72037;--l5:#1f447e;--l6:#6ba6b0;--l7:#6c70a8;stroke-width:1.5}

.titlebar{display:flex;align-items:center;height:23px;padding:0 2px;color:#000}
.appicon{width:16px;height:16px;background:#f4f4f4;border-right:1px solid #aaa;border-bottom:1px solid #aaa}
.wtitle{flex:1;padding-left:5px;font-size:11px}
.win{width:46px;height:22px}
.win svg{width:12px;height:12px}
.menu{display:flex;height:20px;padding-left:8px;gap:17px;color:#000;align-items:center;font-size:11px}

.toolbar{display:flex;height:41px;background:#f5f5f5;align-items:center;color:#b8b8b8}
.tg{display:flex;align-items:center;height:34px;padding:0 7px;border-right:1px solid #ccc}
.tg.last{border:0;flex:1}
.tb{width:32px;height:28px}
.tb.n{width:28px}
.tb svg{width:18px;height:18px}
.on{color:#555}
.heavy{stroke-width:2}
.plus{stroke:#333;stroke-width:2}
.bars{stroke-width:2}
.solid{fill:currentColor;stroke:none}
.car{width:12px;height:28px}
.car::before{content:"";border:3px solid transparent;border-top-color:currentColor;border-bottom:0}
select{appearance:none;font:inherit;color:inherit;background:none;border-radius:0}
.fit{width:104px;height:23px;margin:0 8px;border:1px solid #ccc;border-radius:2px;background:linear-gradient(225deg,#ccc 50%,transparent 50%) no-repeat right 13px center/4px 4px,linear-gradient(135deg,#ccc 50%,transparent 50%) no-repeat right 9px center/4px 4px;opacity:1}
.showme{margin-right:29px;gap:4px;font-size:13px;color:#8a8a8a}
.showme svg{width:16px;height:16px;stroke-width:3;stroke:#aaa}

.body{flex:1;display:flex;min-height:0}
.side{width:210px;background:#fafafa;border-right:1px solid #ccc;display:flex;flex-direction:column;border-top:1px solid #d4d4d4}
.stabs{display:flex;height:26px;font-size:13px}
.st{padding-bottom:1px}
.st.cur{width:92px;justify-content:flex-start;padding-left:18px;font-weight:700;color:#000}
.st.lay{flex:1;justify-content:space-between;padding:0 6px 2px 12px;border-left:1px solid #ccc;border-bottom:1px solid #ccc}
.st svg{width:8px;height:10px}
h2{font-size:13px;line-height:18px;font-weight:600}
.points{padding:16px 18px 13px;border-bottom:1px solid #ccc}
.btns{display:flex;gap:12px;margin-top:12px}
.btns button{flex:1;height:23px;border:1px solid #c4c4c4;border-radius:2px;background:#fff;font-size:12px;color:#555}
.sheets{flex:1;list-style:none;padding-top:19px;font-size:13px;color:#555}
.sheets li{display:flex;align-items:center;height:20px;padding-left:18px;gap:7px}
.sheets svg{width:18px;height:18px}
.hov{background:#f3f3f3}
.dot{fill:#2f7fa0;stroke:none}
.tick{stroke:#fff}
.drag{height:77px;border-top:1px solid #ccc;padding:15px 20px;display:flex;gap:12px;line-height:20px;color:#555}
.drag b{font-size:17px;line-height:20px;font-weight:400}
.show{height:47px;border-top:1px solid #ccc;padding-left:18px;display:flex;align-items:center;color:#555}
.show label{display:flex;align-items:center;gap:5px}
.show input{appearance:none;margin:0;width:15px;height:15px;border:1px solid #555;border-radius:2px;display:grid;place-items:center}
.show input::after{content:"";width:4px;height:8px;border:solid #555;border-width:0 2px 2px 0;transform:rotate(40deg)}
.size{height:99px;border-top:1px solid #ccc;padding:17px 18px}
.size select{width:100%;height:24px;margin-top:11px;border:0;border-bottom:1px solid #bbb;color:#555;background:linear-gradient(225deg,#666 50%,transparent 50%) no-repeat right 4px center/4px 4px,linear-gradient(135deg,#666 50%,transparent 50%) no-repeat right 0 center/4px 4px}

.canvas{flex:1;min-width:0;position:relative;display:flex;flex-direction:column;background:#fff;font-family:"Noto Sans",sans-serif}
h1{font-size:24px;font-weight:400;line-height:32px;padding:9px 11px 11px}
.strip{display:flex;height:70px}
.nav{width:38px;padding-left:2px;color:#b0b0b0}
.nav svg{width:16px;height:26px;stroke-width:3;stroke-linecap:round}
.nav.next{width:39px;color:#d8d8d8;justify-content:flex-start;padding-left:9px}
.cards{flex:1;display:flex;justify-content:flex-end;gap:2px;overflow:hidden}
.card{flex:0 0 150px;background:#ececec;color:#828282;padding:11px 10px 0;line-height:18px;text-align:left;align-items:flex-start;justify-content:flex-start}
.card span{height:50px;overflow:hidden}
.card.cut{display:block;padding:11px 0 0 118px}
.card.active{background:#d9d9d9;border:1px solid #666;color:#000;padding:10px 9px 0}
.pop{position:absolute;right:44px;top:4px;width:143px;height:38px;border:2px solid #b8b8b8;border-radius:4px;background:#f9f9f9;box-shadow:2px 2px 3px #0003;display:flex;align-items:center;padding-left:2px;color:#d8d8d8}
.pop button{width:33px}
.pop svg{width:18px;height:18px}
.pop .x{color:#555}
.pop .x svg{width:20px;height:20px}
.pop::after{content:"";position:absolute;left:65px;bottom:-6px;width:9px;height:9px;background:#f9f9f9;border:solid #aaa;border-width:0 1px 1px 0;transform:rotate(45deg)}
.hbar{height:9px;margin:2px 39px 17px 147px;background:#b1b1b1;border-radius:4px}
.view{flex:1;min-height:0;display:flex;padding-left:16px}
.mapbox{flex:1;min-width:0;border:1px solid #e0e0e0;border-bottom:0;overflow:hidden;background:#c0d1d1}
.map{width:100%;height:100%}
.land path{stroke:#6c6c6c;stroke-width:4}
.land .n{fill:none}
.land .dark{stroke-width:7}
.land .c0{fill:#ededed}
.land .c1{fill:#c1e4dc}
.land .c2{fill:#b5dfd8}
.land .c3{fill:#a6d3d1}
.land .c3b{fill:#8fc7cf}
.land .c4{fill:#75b6c7}
.land .c5{fill:#5092b1}
.land .c6{fill:#527ba0}
.land .c7{fill:#4e7299}
.land .sea{fill:#c0d1d1}
.land .bare{stroke:none}
.land .ice{fill:#ededed;stroke:none}
.land .snow{fill:none;stroke:#ededed;stroke-width:5}
.lab{font-size:12px;fill:#222;stroke:none;text-anchor:middle}
.legend{width:176px;padding:4px 0 0 4px}
h3{font-size:12px;line-height:18px;font-weight:400}
.scale{display:flex;align-items:center;gap:4px;padding:3px 0 0 4px;line-height:18px;color:#555}
.scale i{width:107px;height:16px;border:1px solid #b0a898;background:linear-gradient(90deg,#bce4d8,#49a4bd 50%,#2c5985)}
.gutter{width:124px;background:#f4f4f4}
.vbar{width:16px;background:#f1f1f1;border-left:1px solid #fff;display:flex;flex-direction:column}
.vbar button{height:17px;color:#444}
.vbar svg{width:10px;height:10px;stroke-width:2}
.thumb{height:343px;background:#cdcdcd;margin-bottom:auto}

.tabs{display:flex;height:31px;background:#e6e6e6;border-top:1px solid #ccc;border-bottom:1px solid #ccc;color:#666}
.tabs button{width:57px;border-right:1px solid #ccc;gap:2px}
.tabs svg{width:16px;height:16px}
.tabs .ds{width:130px;justify-content:flex-start;padding-left:6px}
.tabs .db{width:102px}
.tabs .story{width:71px;background:#fff;font-weight:600;color:#444}
.tabs .new{width:32px}
.tabs .new svg{width:18px;height:18px}
.tabs .plus{stroke:#555}
.status{display:flex;justify-content:flex-end;height:20px;background:#ebebeb}
.status span{border-left:1px solid #ccc;display:flex;align-items:center}
.w127{width:127px}.w26{width:26px}.w27{width:27px}.w47{width:48px}
.vcr{width:71px;padding-left:6px}
.vcr svg{width:60px;height:10px;fill:#b4b4b4;stroke:none}
.modes{width:68px;padding-left:8px}
.modes svg{width:54px;height:12px;stroke:none}
.modes .g{fill:#b8b8b8}
.modes .d{fill:#555}

.task{display:flex;height:40px;background:linear-gradient(90deg,#141d03,#191f0c 35%,#191f0c 70%,#101700 76%,#141d02);color:#fff}
.task button{width:48px}
.task .wide{width:51px}
.task svg{width:24px;height:24px;stroke:none}
.task .folder{margin-left:50px}
.task .run{background:#494e3e;border-bottom:3px solid #d6fa9e;border-top:3px solid transparent}
.task .run svg{background:#fff;stroke:currentColor;width:22px;height:22px}
.tray{margin-left:auto;display:flex;align-items:center;padding-right:16px;gap:7px;font-size:11px;line-height:17px;text-align:center}
.tray svg{width:16px;height:16px;stroke:#fff}
.tray time{margin-left:10px}
```
